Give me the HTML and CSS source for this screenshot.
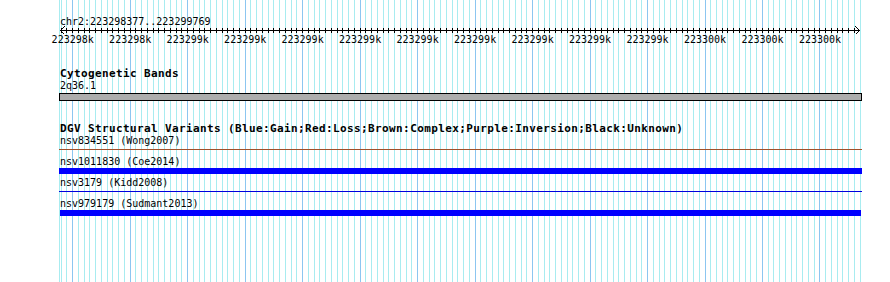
FILE: index.html
```html
<!DOCTYPE html>
<html>
<head>
<meta charset="utf-8">
<title>chr2:223298377..223299769</title>
<link rel="stylesheet" href="styles.css">
</head>
<body>
<div class="page">
  <svg class="grid" width="890" height="282" viewBox="0 0 890 282" aria-hidden="true">
    <path class="grid-minor" d="M59.5 0v282M61.5 0v282M66.5 0v282M78.5 0v282M84.5 0v282M89.5 0v282M95.5 0v282M101.5 0v282M107.5 0v282M112.5 0v282M118.5 0v282M124.5 0v282M135.5 0v282M141.5 0v282M147.5 0v282M153.5 0v282M158.5 0v282M164.5 0v282M170.5 0v282M176.5 0v282M181.5 0v282M193.5 0v282M199.5 0v282M204.5 0v282M210.5 0v282M216.5 0v282M222.5 0v282M227.5 0v282M233.5 0v282M239.5 0v282M250.5 0v282M256.5 0v282M262.5 0v282M268.5 0v282M273.5 0v282M279.5 0v282M285.5 0v282M291.5 0v282M296.5 0v282M308.5 0v282M314.5 0v282M319.5 0v282M325.5 0v282M331.5 0v282M337.5 0v282M342.5 0v282M348.5 0v282M354.5 0v282M365.5 0v282M371.5 0v282M377.5 0v282M383.5 0v282M388.5 0v282M394.5 0v282M400.5 0v282M406.5 0v282M411.5 0v282M423.5 0v282M429.5 0v282M434.5 0v282M440.5 0v282M446.5 0v282M452.5 0v282M457.5 0v282M463.5 0v282M469.5 0v282M480.5 0v282M486.5 0v282M492.5 0v282M498.5 0v282M503.5 0v282M509.5 0v282M515.5 0v282M521.5 0v282M526.5 0v282M538.5 0v282M544.5 0v282M549.5 0v282M555.5 0v282M561.5 0v282M567.5 0v282M572.5 0v282M578.5 0v282M584.5 0v282M595.5 0v282M601.5 0v282M607.5 0v282M613.5 0v282M618.5 0v282M624.5 0v282M630.5 0v282M636.5 0v282M641.5 0v282M653.5 0v282M659.5 0v282M664.5 0v282M670.5 0v282M676.5 0v282M682.5 0v282M687.5 0v282M693.5 0v282M699.5 0v282M710.5 0v282M716.5 0v282M722.5 0v282M727.5 0v282M733.5 0v282M739.5 0v282M745.5 0v282M750.5 0v282M756.5 0v282M768.5 0v282M773.5 0v282M779.5 0v282M785.5 0v282M791.5 0v282M796.5 0v282M802.5 0v282M808.5 0v282M814.5 0v282M825.5 0v282M831.5 0v282M837.5 0v282M842.5 0v282M848.5 0v282M854.5 0v282M860.5 0v282"/>
    <path class="grid-major" d="M72.5 0v282M130.5 0v282M187.5 0v282M245.5 0v282M302.5 0v282M360.5 0v282M417.5 0v282M475.5 0v282M532.5 0v282M590.5 0v282M647.5 0v282M705.5 0v282M762.5 0v282M819.5 0v282"/>
  </svg>

  <div class="panel">
    <div class="ruler-title">chr2:223298377..223299769</div>
    <svg class="ruler" width="803" height="18" viewBox="59 28 803 18">
      <path class="ruler-line" d="M60 30.5H860"/>
      <path class="ruler-line" d="M61.5 28v5M66.5 28v5M72.5 28v5M78.5 28v5M84.5 28v5M89.5 28v5M95.5 28v5M101.5 28v5M107.5 28v5M112.5 28v5M118.5 28v5M124.5 28v5M130.5 28v5M135.5 28v5M141.5 28v5M147.5 28v5M153.5 28v5M158.5 28v5M164.5 28v5M170.5 28v5M176.5 28v5M181.5 28v5M187.5 28v5M193.5 28v5M199.5 28v5M204.5 28v5M210.5 28v5M216.5 28v5M222.5 28v5M227.5 28v5M233.5 28v5M239.5 28v5M245.5 28v5M250.5 28v5M256.5 28v5M262.5 28v5M268.5 28v5M273.5 28v5M279.5 28v5M285.5 28v5M291.5 28v5M296.5 28v5M302.5 28v5M308.5 28v5M314.5 28v5M319.5 28v5M325.5 28v5M331.5 28v5M337.5 28v5M342.5 28v5M348.5 28v5M354.5 28v5M360.5 28v5M365.5 28v5M371.5 28v5M377.5 28v5M383.5 28v5M388.5 28v5M394.5 28v5M400.5 28v5M406.5 28v5M411.5 28v5M417.5 28v5M423.5 28v5M429.5 28v5M434.5 28v5M440.5 28v5M446.5 28v5M452.5 28v5M457.5 28v5M463.5 28v5M469.5 28v5M475.5 28v5M480.5 28v5M486.5 28v5M492.5 28v5M498.5 28v5M503.5 28v5M509.5 28v5M515.5 28v5M521.5 28v5M526.5 28v5M532.5 28v5M538.5 28v5M544.5 28v5M549.5 28v5M555.5 28v5M561.5 28v5M567.5 28v5M572.5 28v5M578.5 28v5M584.5 28v5M590.5 28v5M595.5 28v5M601.5 28v5M607.5 28v5M613.5 28v5M618.5 28v5M624.5 28v5M630.5 28v5M636.5 28v5M641.5 28v5M647.5 28v5M653.5 28v5M659.5 28v5M664.5 28v5M670.5 28v5M676.5 28v5M682.5 28v5M687.5 28v5M693.5 28v5M699.5 28v5M705.5 28v5M710.5 28v5M716.5 28v5M722.5 28v5M727.5 28v5M733.5 28v5M739.5 28v5M745.5 28v5M750.5 28v5M756.5 28v5M762.5 28v5M768.5 28v5M773.5 28v5M779.5 28v5M785.5 28v5M791.5 28v5M796.5 28v5M802.5 28v5M808.5 28v5M814.5 28v5M819.5 28v5M825.5 28v5M831.5 28v5M837.5 28v5M842.5 28v5M848.5 28v5M854.5 28v5"/>
      <polyline class="ruler-arrow" points="64.5,26.5 60.5,30.5 64.5,34.5"/>
      <polyline class="ruler-arrow" points="855.5,26.5 859.5,30.5 855.5,34.5"/>
      <g class="ruler-labels">
        <text x="72.7" y="43">223298k</text>
        <text x="130.2" y="43">223298k</text>
        <text x="187.7" y="43">223299k</text>
        <text x="245.2" y="43">223299k</text>
        <text x="302.6" y="43">223299k</text>
        <text x="360.1" y="43">223299k</text>
        <text x="417.6" y="43">223299k</text>
        <text x="475.1" y="43">223299k</text>
        <text x="532.6" y="43">223299k</text>
        <text x="590.0" y="43">223299k</text>
        <text x="647.5" y="43">223299k</text>
        <text x="705.0" y="43">223300k</text>
        <text x="762.5" y="43">223300k</text>
        <text x="820.0" y="43">223300k</text>
      </g>
    </svg>

    <section class="track track-bands">
      <div class="track-title">Cytogenetic Bands</div>
      <div class="feature-label">2q36.1</div>
      <div class="band"></div>
    </section>

    <section class="track track-dgv">
      <div class="track-title">DGV Structural Variants (Blue:Gain;Red:Loss;Brown:Complex;Purple:Inversion;Black:Unknown)</div>
      <div class="feature-row">
        <div class="feature-label">nsv834551 (Wong2007)</div>
        <div class="glyph glyph-line glyph-brown"></div>
      </div>
      <div class="feature-row">
        <div class="feature-label">nsv1011830 (Coe2014)</div>
        <div class="glyph glyph-bar glyph-blue"></div>
      </div>
      <div class="feature-row">
        <div class="feature-label">nsv3179 (Kidd2008)</div>
        <div class="glyph glyph-line glyph-blue-line"></div>
      </div>
      <div class="feature-row">
        <div class="feature-label">nsv979179 (Sudmant2013)</div>
        <div class="glyph glyph-bar glyph-blue glyph-inset"></div>
      </div>
    </section>
  </div>
</div>
</body>
</html>
```

FILE: styles.css
```css
html, body {
  margin: 0;
  padding: 0;
  background: #ffffff;
}

.page {
  position: relative;
  width: 890px;
  height: 282px;
  overflow: hidden;
  background: #ffffff;
}

.grid {
  position: absolute;
  left: 0;
  top: 0;
  z-index: 0;
  shape-rendering: crispEdges;
}

.grid-minor {
  fill: none;
  stroke: #a8ecf0;
  stroke-width: 1;
}

.grid-major {
  fill: none;
  stroke: #8cc6f0;
  stroke-width: 1;
}

.panel {
  position: relative;
  z-index: 1;
  margin-left: 59px;
  width: 803px;
  padding-top: 16px;
  font-family: "DejaVu Sans Mono", "Liberation Mono", monospace;
  font-size: 10px;
  line-height: 12px;
  color: #000000;
}

.ruler-title {
  height: 12px;
  padding-left: 1px;
  white-space: nowrap;
}

.ruler {
  display: block;
  overflow: visible;
}

.ruler-line {
  fill: none;
  stroke: #000000;
  stroke-width: 1;
  shape-rendering: crispEdges;
}

.ruler-arrow {
  fill: none;
  stroke: #000000;
  stroke-width: 1;
  shape-rendering: crispEdges;
}

.ruler-labels {
  font-family: "DejaVu Sans Mono", "Liberation Mono", monospace;
  font-size: 10px;
  fill: #000000;
  text-anchor: middle;
}

.track {
  margin-top: 21px;
}

.track-title {
  height: 13px;
  padding-left: 1px;
  font-size: 11px;
  font-weight: bold;
  line-height: 13px;
  letter-spacing: 0.38px;
  white-space: nowrap;
}

.feature-label {
  height: 12px;
  padding-left: 1px;
  white-space: nowrap;
}

.band {
  height: 6px;
  margin-top: 1px;
  border: 1px solid #000000;
  background: #adadad;
}

.feature-row {
  height: 21px;
}

.glyph-bar {
  height: 6px;
}

.glyph-line {
  height: 1px;
  margin-top: 2px;
}

.glyph-brown {
  background: #a0502a;
}

.glyph-blue {
  background: #0000ff;
}

.glyph-blue-line {
  background: #0000dd;
}

.glyph-inset {
  margin: 0 1px;
}
```
